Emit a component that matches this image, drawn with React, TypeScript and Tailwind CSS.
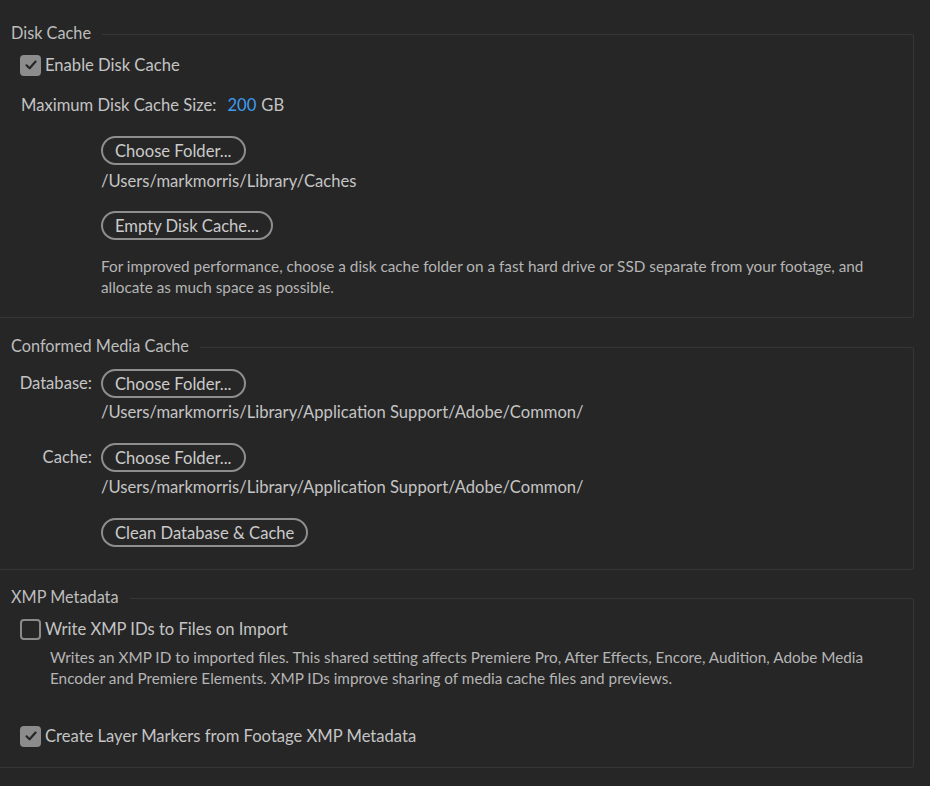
import { ReactNode } from "react";

const FONT = "font-['Lato','Noto_Sans',sans-serif]";

function Check({ checked }: { checked: boolean }) {
  if (!checked) {
    return <span className="block h-[21px] w-[21px] shrink-0 rounded-[4px] border-2 border-[#8a8a8a]" />;
  }
  return (
    <span className="flex h-[21px] w-[21px] shrink-0 items-center justify-center rounded-[4px] bg-[#8c8c8c]">
      <svg width="14" height="14" viewBox="0 0 14 14" fill="none">
        <path d="M2.5 7.3 L5.6 10.3 L11.6 3.6" stroke="#262626" strokeWidth="2.2" strokeLinecap="round" strokeLinejoin="round" />
      </svg>
    </span>
  );
}

function PillButton({ children }: { children: ReactNode }) {
  return (
    <button className="h-[29px] rounded-full border-2 border-[#8e8e8e] bg-[#262626] px-[12px] text-[16.6px] leading-[22px] text-[#cbcbcb]">
      {children}
    </button>
  );
}

function Group({ title, className, children }: { title: string; className?: string; children: ReactNode }) {
  return (
    <section className={`w-[914px] rounded-r-[3px] border-y border-r border-[#363636] ${className ?? ""}`}>
      <div className="-mt-[13px] flex">
        <div className="bg-[#262626] pl-[11px] pr-[11px] text-[16.3px] leading-[22px] text-[#bdbdbd]">{title}</div>
      </div>
      {children}
    </section>
  );
}

export default function App() {
  return (
    <div className={`min-h-[786px] w-[930px] overflow-hidden bg-[#262626] pt-[34px] ${FONT} text-[#c4c4c4]`}>
      <Group title="Disk Cache" className="pb-[19px]">
        <div className="mt-[10px] flex h-[22px] items-center gap-[4px] pl-[20px] text-[16.6px]">
          <Check checked />
          <span>Enable Disk Cache</span>
        </div>
        <div className="mt-[18px] flex h-[22px] items-center pl-[21px] text-[16.6px]">
          <span>Maximum Disk Cache Size:</span>
          <span className="ml-[11px] text-[#3f9cf0]">200</span>
          <span className="ml-[5px]">GB</span>
        </div>
        <div className="mt-[20px] pl-[101px]">
          <PillButton>Choose Folder...</PillButton>
        </div>
        <div className="mt-[5px] pl-[101px] text-[16.6px] leading-[22px]">/Users/markmorris/Library/Caches</div>
        <div className="mt-[19px] pl-[101px]">
          <PillButton>Empty Disk Cache...</PillButton>
        </div>
        <p className="mt-[16px] pl-[101px] pr-[20px] text-[15.3px] leading-[21px] text-[#b5b5b5]">
          For improved performance, choose a disk cache folder on a fast hard drive or SSD separate from your footage, and
          <br />
          allocate as much space as possible.
        </p>
      </Group>

      <Group title="Conformed Media Cache" className="mt-[29px] pb-[22px]">
        <div className="mt-[12px] flex items-center">
          <span className="w-[101px] pr-[9px] text-right text-[16.6px]">Database:</span>
          <PillButton>Choose Folder...</PillButton>
        </div>
        <div className="mt-[3px] pl-[101px] text-[16.6px] leading-[22px]">
          /Users/markmorris/Library/Application Support/Adobe/Common/
        </div>
        <div className="mt-[20px] flex items-center">
          <span className="w-[101px] pr-[9px] text-right text-[16.6px]">Cache:</span>
          <PillButton>Choose Folder...</PillButton>
        </div>
        <div className="mt-[4px] pl-[101px] text-[16.6px] leading-[22px]">
          /Users/markmorris/Library/Application Support/Adobe/Common/
        </div>
        <div className="mt-[20px] pl-[101px]">
          <PillButton>Clean Database &amp; Cache</PillButton>
        </div>
      </Group>

      <Group title="XMP Metadata" className="mt-[28px] pb-[20px]">
        <div className="mt-[10px] flex h-[22px] items-center gap-[4px] pl-[20px] text-[16.6px]">
          <Check checked={false} />
          <span>Write XMP IDs to Files on Import</span>
        </div>
        <p className="mt-[7px] pl-[50px] pr-[20px] text-[15.3px] leading-[21px] text-[#b5b5b5]">
          Writes an XMP ID to imported files. This shared setting affects Premiere Pro, After Effects, Encore, Audition, Adobe Media
          <br />
          Encoder and Premiere Elements. XMP IDs improve sharing of media cache files and previews.
        </p>
        <div className="mt-[36px] flex h-[22px] items-center gap-[4px] pl-[20px] text-[16.6px]">
          <Check checked />
          <span>Create Layer Markers from Footage XMP Metadata</span>
        </div>
      </Group>
    </div>
  );
}
